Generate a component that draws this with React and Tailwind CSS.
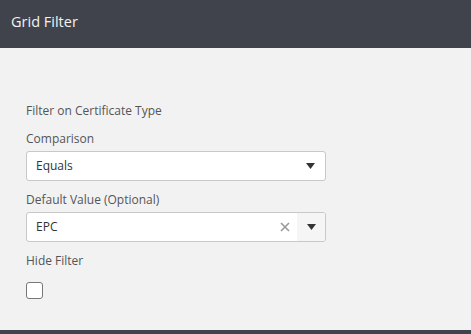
export default function App() {
  const font = { fontFamily: '"Open Sans", "Segoe UI", sans-serif' };
  return (
    <div className="w-[471px] h-[334px] flex flex-col bg-[#f2f2f2] overflow-hidden" style={font}>
      <div className="h-[48px] shrink-0 bg-[#40434c] pl-[11px] pt-[9px]">
        <span className="text-[14.5px] text-[#f2f2f2] leading-[20px]">Grid Filter</span>
      </div>
      <div className="flex-1 flex flex-col pl-[26px] pt-[55px]">
        <div className="text-[12px] leading-[16px] text-[#555]">Filter on Certificate Type</div>
        <div className="text-[12px] leading-[16px] text-[#555] mt-[12px]">Comparison</div>
        <div className="mt-[4px] w-[300px] h-[30px] bg-white border border-[#c8c8c8] rounded-[3px] flex items-center pl-[9px] pr-[10px]">
          <span className="flex-1 text-[12px] text-[#333]">Equals</span>
          <svg width="9" height="6" viewBox="0 0 9 6"><path d="M0 0h9L4.5 6z" fill="#333" /></svg>
        </div>
        <div className="text-[12px] leading-[16px] text-[#555] mt-[11px]">Default Value (Optional)</div>
        <div className="mt-[4px] w-[300px] h-[30px] bg-white border border-[#c8c8c8] rounded-[3px] flex items-stretch overflow-hidden">
          <span className="flex-1 flex items-center pl-[9px] text-[12px] text-[#333]">EPC</span>
          <div className="w-[24px] flex items-center justify-center">
            <svg width="10" height="10" viewBox="0 0 10 10"><path d="M1 1L9 9M9 1L1 9" stroke="#999" strokeWidth="1.6" /></svg>
          </div>
          <div className="w-[28px] bg-[#f5f5f5] flex items-center justify-center">
            <svg width="9" height="6" viewBox="0 0 9 6"><path d="M0 0h9L4.5 6z" fill="#333" /></svg>
          </div>
        </div>
        <div className="text-[12px] leading-[16px] text-[#555] mt-[11px]">Hide Filter</div>
        <div className="mt-[13px] w-[17px] h-[17px] bg-white border-[1.5px] border-[#777] rounded-[3px]" />
      </div>
      <div className="h-[4px] shrink-0 bg-[#40434c]" />
    </div>
  );
}
